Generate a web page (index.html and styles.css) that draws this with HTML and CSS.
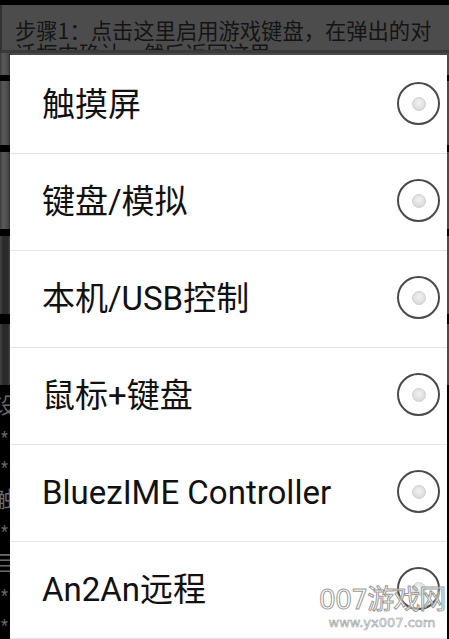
FILE: index.html
```html
<!DOCTYPE html>
<html lang="zh-CN">
<head>
<meta charset="utf-8">
<link rel="stylesheet" href="styles.css">
</head>
<body>
<div class="screen">
  <div class="statusbar"></div>
  <div class="header">步骤1：点击这里启用游戏键盘，在弹出的对话框中确认，然后返回这里。</div>
  <div class="underlay">
    <div class="blk b1"></div>
    <div class="gap"></div>
    <div class="blk b2"></div>
    <div class="gap"></div>
    <div class="blk b3"></div>
    <div class="gap"></div>
    <div class="blk b4"></div>
    <div class="gap g2"></div>
    <div class="blk b5"></div>
    <div class="settings">
      <div class="st big">设</div>
      <div class="st">*</div>
      <div class="st">*</div>
      <div class="st big">触</div>
      <div class="st">*</div>
      <div class="st big">目</div>
      <div class="st">*</div>
      <div class="st">*</div>
    </div>
  </div>

  <div class="dialog">
    <ul class="options">
      <li class="option"><span class="label">触摸屏</span><span class="radio"><span class="dot"></span></span></li>
      <li class="option"><span class="label">键盘/模拟</span><span class="radio"><span class="dot"></span></span></li>
      <li class="option"><span class="label">本机/USB控制</span><span class="radio"><span class="dot"></span></span></li>
      <li class="option"><span class="label">鼠标+键盘</span><span class="radio"><span class="dot"></span></span></li>
      <li class="option"><span class="label">BluezIME Controller</span><span class="radio"><span class="dot"></span></span></li>
      <li class="option"><span class="label">An2An远程</span><span class="radio"><span class="dot"></span></span></li>
    </ul>
  </div>

  <div class="watermark">
    <div class="wm-big">007游戏网</div>
    <div class="wm-small">www.yx007.com</div>
  </div>
</div>
</body>
</html>
```

FILE: styles.css
```css
* { box-sizing: border-box; }
html, body {
  margin: 0;
  padding: 0;
  width: 449px;
  height: 639px;
  overflow: hidden;
  background: #000;
}
.screen {
  position: relative;
  width: 449px;
  height: 639px;
  overflow: hidden;
  background: #4a4a4a;
  font-family: Roboto, "Noto Sans CJK SC", sans-serif;
}
.statusbar {
  height: 5px;
  background: #000;
}
.header {
  height: 48px;
  padding: 13px 0 0 13px;
  font-family: "Noto Sans CJK SC", sans-serif;
  font-size: 21.3px;
  line-height: 23px;
  color: #141414;
  background: #4c4c4c;
  border-bottom: 3px solid #3a3a3a;
  border-left: 2px solid #333;
  overflow: hidden;
}
.underlay {
  display: flex;
  flex-direction: column;
  height: 586px;
}
.blk {
  background: linear-gradient(90deg, #3a3a3a 0, #5a5a5a 3px, #4e4e4e 7px, #333 10px, #4a4a4a 12px);
}
.b1 { height: 22px; }
.b2 { height: 65px; }
.b3 { height: 78px; }
.b4 { height: 80px; background: linear-gradient(90deg, #444 0, #2a2a2a 3px, #2a2a2a 8px, #4a4a4a 10px); }
.b5 { height: 62px; background: linear-gradient(90deg, #444 0, #2a2a2a 3px, #2a2a2a 8px, #4a4a4a 10px); }
.gap { height: 7px; background: #000; }
.g2 { height: 10px; }
.settings {
  flex: 1;
  background: #000;
  padding: 6px 0 0 0;
  display: flex;
  flex-direction: column;
  gap: 4px;
}
.st {
  color: #6a6a6a;
  font-size: 16px;
  line-height: 26px;
  margin-left: 1px;
}
.st.big {
  font-size: 22px;
  line-height: 30px;
  margin-left: -6px;
}
.dialog {
  position: absolute;
  left: 10px;
  top: 55px;
  right: 2px;
  bottom: 0;
  background: #fff;
  overflow: hidden;
}
.options {
  list-style: none;
  margin: 0;
  padding: 2px 0 0 0;
}
.option {
  height: 97px;
  border-bottom: 1px solid #e4e4e4;
  display: flex;
  align-items: center;
  justify-content: space-between;
  padding: 0 7px 0 32px;
}
.label {
  font-size: 33px;
  color: #111;
  line-height: 40px;
  margin-top: 0;
}
.radio {
  width: 43px;
  height: 43px;
  border-radius: 50%;
  border: 2px solid #4a4a4a;
  display: flex;
  align-items: center;
  justify-content: center;
  margin-top: -3px;
}
.dot {
  width: 14px;
  height: 14px;
  border-radius: 50%;
  background: radial-gradient(circle at 50% 40%, #f2f2f2 0, #dcdcdc 70%, #c8c8c8 100%);
  border: 1px solid #d0d0d0;
}
.watermark {
  position: absolute;
  left: 318px;
  top: 585px;
  width: 128px;
  text-align: center;
  color: rgba(255,255,255,0.6);
  -webkit-text-stroke: 1px #9a9a9a;
  font-family: "DejaVu Sans", "Noto Sans CJK SC", sans-serif;
}
.wm-big {
  font-size: 27px;
  line-height: 30px;
  letter-spacing: -1px;
}
.wm-small {
  font-size: 13px;
  line-height: 16px;
  -webkit-text-stroke: 0.6px #9a9a9a;
}
```
